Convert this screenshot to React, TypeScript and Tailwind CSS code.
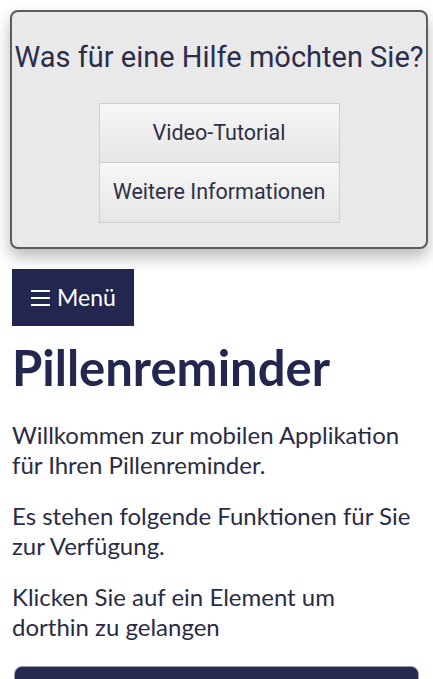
import React from "react";

const HelpPopup = () => {
  return (
    <div className="ml-[10px] mr-[5px] mt-[10px] h-[239px] rounded-lg border-2 border-[#5b5b5b] bg-[#e9e9e9] shadow-[0_8px_16px_rgba(0,0,0,0.28)] flex flex-col items-center">
      <h2 className="mt-[28px] text-[29px] leading-[34px] text-[#2b2d4b] whitespace-nowrap" style={{ fontFamily: "Roboto, sans-serif" }}>
        Was für eine Hilfe möchten Sie?
      </h2>
      <div className="mt-[29px] flex flex-col w-[241px]">
        <button className="h-[60px] border border-[#cfcfcf] bg-gradient-to-b from-[#f7f7f7] to-[#e6e6e6] text-[21.5px] text-[#2e3046]" style={{ fontFamily: "Roboto, sans-serif" }}>
          Video-Tutorial
        </button>
        <button className="h-[60px] border border-t-0 border-[#cfcfcf] bg-gradient-to-b from-[#f7f7f7] to-[#e6e6e6] text-[21.5px] text-[#2e3046]" style={{ fontFamily: "Roboto, sans-serif" }}>
          Weitere Informationen
        </button>
      </div>
    </div>
  );
};

export default function App() {
  return (
    <div className="w-[433px] h-[679px] overflow-hidden bg-white" style={{ fontFamily: "Lato, sans-serif" }}>
      <HelpPopup />

      <div className="px-3 pt-[20px]">
        <button className="h-[57px] w-[122px] bg-[#23264f] text-white flex items-center gap-[7px] pl-[19px]">
          <svg width="19" height="18" viewBox="0 0 19 18">
            <rect x="0" y="1" width="19" height="2" fill="white" />
            <rect x="0" y="8" width="19" height="2" fill="white" />
            <rect x="0" y="15" width="19" height="2" fill="white" />
          </svg>
          <span className="text-[23px]">Menü</span>
        </button>

        <h1 className="mt-[13px] text-[49px] leading-[56px] font-bold text-[#23264f]">Pillenreminder</h1>

        <div className="mt-[25px] max-w-[402px] text-[24px] leading-[30px] text-[#2a2c45] flex flex-col gap-[21px]">
          <p>Willkommen zur mobilen Applikation für Ihren Pillenreminder.</p>
          <p>Es stehen folgende Funktionen für Sie zur Verfügung.</p>
          <p>Klicken Sie auf ein Element um dorthin zu gelangen</p>
        </div>

        <div className="mt-[24px] ml-[2px] mr-[2px] h-[60px] rounded-t-lg bg-[#262a50] border border-[#9a9ab0]" />
      </div>
    </div>
  );
}
